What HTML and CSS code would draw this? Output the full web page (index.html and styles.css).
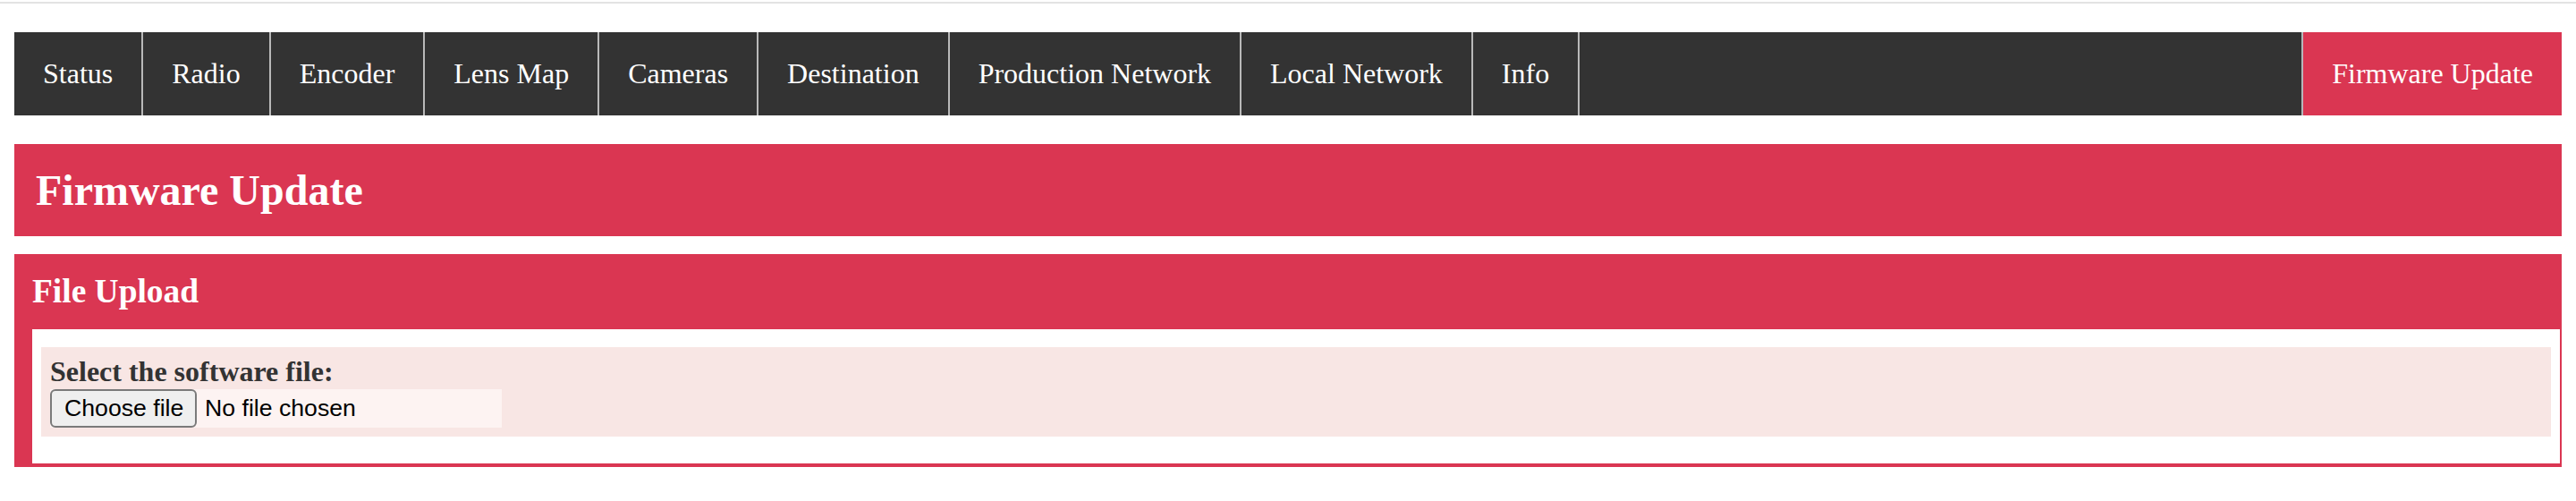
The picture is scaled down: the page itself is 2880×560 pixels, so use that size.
FILE: index.html
```html
<!DOCTYPE html>
<html lang="en">
<head>
<meta charset="utf-8">
<title>Firmware Update</title>
<link rel="stylesheet" href="styles.css">
</head>
<body>
<div class="topline"></div>
<div class="page">
  <nav class="nav">
    <a class="nav-item" href="#">Status</a>
    <a class="nav-item" href="#">Radio</a>
    <a class="nav-item" href="#">Encoder</a>
    <a class="nav-item" href="#">Lens Map</a>
    <a class="nav-item" href="#">Cameras</a>
    <a class="nav-item" href="#">Destination</a>
    <a class="nav-item" href="#">Production Network</a>
    <a class="nav-item" href="#">Local Network</a>
    <a class="nav-item" href="#">Info</a>
    <a class="nav-item nav-item-active" href="#">Firmware Update</a>
  </nav>

  <h1 class="page-title">Firmware Update</h1>

  <section class="panel">
    <h3 class="panel-title">File Upload</h3>
    <div class="panel-body">
      <div class="field">
        <label class="field-label" for="fw-file">Select the software file:</label>
        <label class="file-input" for="fw-file">
          <span class="file-button">Choose file</span>
          <span class="file-name">No file chosen</span>
        </label>
        <input class="file-native" id="fw-file" type="file">
      </div>
    </div>
  </section>
</div>
</body>
</html>
```

FILE: styles.css
```css
html, body {
  margin: 0;
  padding: 0;
  background: #ffffff;
}

body {
  font-family: "Liberation Serif", "Times New Roman", serif;
  color: #333333;
}

.topline {
  height: 2px;
  margin-top: 2px;
  background: #e3e3e3;
}

.page {
  padding: 32px 16px 0 16px;
}

.nav {
  display: flex;
  background: #333333;
}

.nav-item {
  display: block;
  padding: 28px 32px;
  line-height: 37px;
  font-size: 32px;
  color: #ffffff;
  text-decoration: none;
  border-right: 2px solid #b9b9b9;
  white-space: nowrap;
}

.nav-item-active {
  margin-left: auto;
  border-right: none;
  border-left: 2px solid #b4b7ba;
  background: #da3652;
}

.page-title {
  margin: 32px 0 20px 0;
  padding: 24px;
  background: #da3652;
  color: #ffffff;
  font-size: 48px;
  line-height: 55px;
  font-weight: bold;
}

.panel {
  background: #da3652;
  padding: 0 2px 4px 20px;
}

.panel-title {
  margin: 0;
  padding: 20px 0 21px 0;
  font-size: 37.44px;
  line-height: 43px;
  font-weight: bold;
  color: #ffffff;
}

.panel-body {
  background: #ffffff;
  padding: 20px 10px 30px 10px;
}

.field {
  background: #f8e6e4;
  padding: 9px 10px 10px 10px;
}

.field-label {
  display: block;
  font-size: 32px;
  line-height: 37px;
  font-weight: bold;
  color: #333333;
  margin-bottom: 1px;
}

.file-input {
  display: flex;
  align-items: center;
  width: 505px;
  height: 43px;
  background: #fdf3f2;
  font-family: "Liberation Sans", Arial, sans-serif;
  font-size: 26.67px;
  color: #000000;
  cursor: pointer;
}

.file-button {
  box-sizing: border-box;
  display: flex;
  align-items: center;
  height: 43px;
  width: 164px;
  padding: 0 14px;
  border: 2px solid #7a7a7a;
  border-radius: 6px;
  background: #efefef;
  white-space: nowrap;
}

.file-name {
  margin-left: 9px;
  white-space: nowrap;
}

.file-native {
  display: none;
}
```
